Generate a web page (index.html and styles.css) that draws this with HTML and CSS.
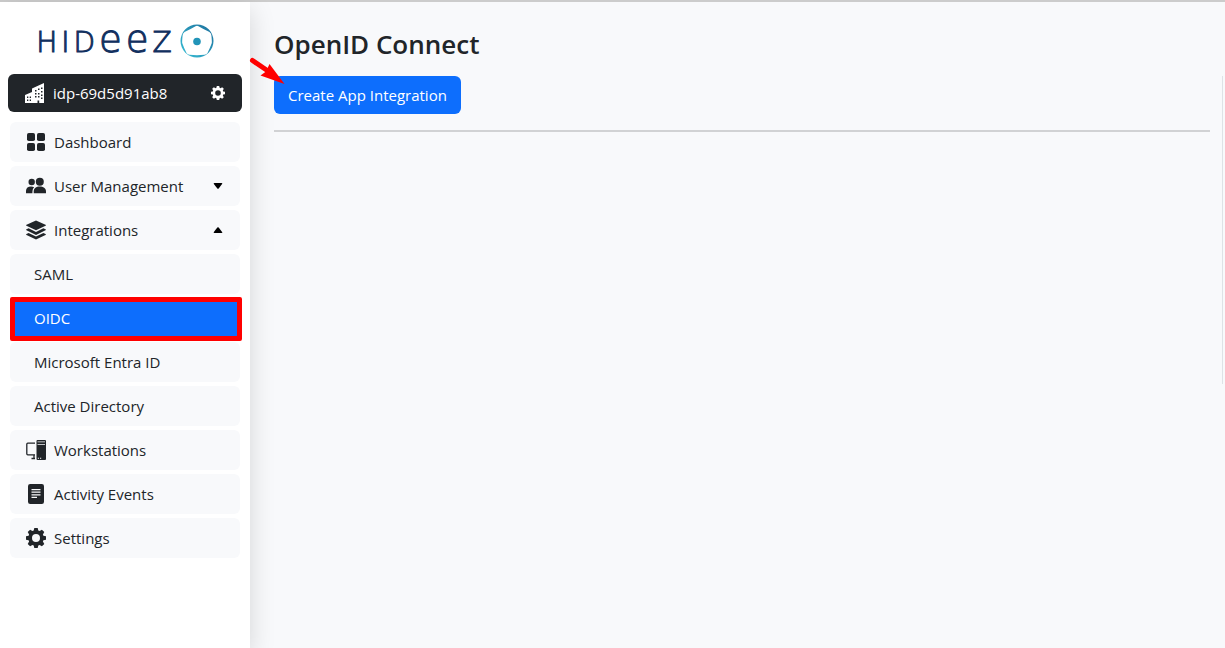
FILE: index.html
```html
<!DOCTYPE html>
<html lang="en">
<head>
<meta charset="utf-8">
<meta name="viewport" content="width=device-width, initial-scale=1">
<title>OpenID Connect</title>
<link rel="stylesheet" href="styles.css">
</head>
<body>
<div class="app">
  <aside class="sidebar">
    <a class="logo" href="#" aria-label="Hideez">
      <span class="wordmark"><span>H</span><span>I</span><span>D</span><span class="tall">e</span><span class="tall">e</span><span>Z</span></span>
      <svg class="logo-mark" viewBox="0 0 34 34" aria-hidden="true">
        <defs><linearGradient id="ring" x1="1" y1="0" x2="0" y2="1"><stop offset="0" stop-color="#1d6f9c"/><stop offset="1" stop-color="#37bfd6"/></linearGradient></defs>
        <path fill="url(#ring)" fill-rule="evenodd" d="M17 .5a16.500 16.500 0 1 1 0 33A16.500 16.500 0 0 1 17 .5ZM15.500 2.200Q10 5.500 4.500 8Q2.500 9.500 2.600 11.500Q2 17 2.200 19Q4 24 6.500 29Q7.500 30.600 9.500 30.800Q17 31.500 24.500 30.800Q26.500 30.600 27.500 29Q30 24 31.800 19Q32 17 31.400 11.500Q31.500 9.500 29.500 8Q24 5.500 18.500 2.200Q17 1.500 15.500 2.200Z"/>
        <circle cx="17" cy="17.500" r="3.800" fill="#2294b8"/>
      </svg>
    </a>
    <div class="org">
      <svg class="icon" viewBox="0 0 20 20" aria-hidden="true">
        <path fill="#fff" d="M0 12l7-3V5.500L19 0v20H0z"/>
        <path fill="#212529" d="M10 7h1.500v1.500H10zM13 5.500h1.500V7H13zM16 4.500h1.500V6H16zM10 10h1.500v1.500H10zM13 10h1.500v1.500H13zM16 8h1.500v1.500H16zM10 13h1.500v1.500H10zM13 13h1.500v1.500H13zM16 11.500h1.500V13H16zM16 14.500h1.500V16H16zM2 13.500h1.300V15H2zM4.700 13.500H6V15H4.700zM2 16.500h1.300V18H2zM4.700 16.500H6V18H4.700zM12.500 17.500h1.700V20h-1.700z"/>
      </svg>
      <span class="org-name">idp-69d5d91ab8</span>
      <button class="gear-button" type="button" aria-label="Organization settings">
        <svg class="icon-small" viewBox="0 0 20 20" aria-hidden="true"><path fill="currentColor" fill-rule="evenodd" d="M8.300 0h3.400l.6 2.600 1.300.5 2.300-1.400 2.400 2.400-1.400 2.300.5 1.300 2.600.6v3.400l-2.600.6-.5 1.300 1.400 2.300-2.400 2.400-2.300-1.400-1.300.5-.6 2.600H8.300l-.6-2.600-1.300-.5-2.300 1.400-2.400-2.400 1.400-2.300-.5-1.300L0 11.700V8.300l2.600-.6.5-1.300-1.400-2.300 2.400-2.400 2.300 1.400 1.300-.5zM10 6a4 4 0 1 0 0 8 4 4 0 0 0 0-8z"/></svg>
      </button>
    </div>
    <nav class="menu" aria-label="Main">
      <a class="item" href="#">
        <svg class="icon" viewBox="0 0 20 20" aria-hidden="true" fill="currentColor"><rect x="1" y="1" width="8" height="8" rx="1.800"/><rect x="11" y="1" width="8" height="8" rx="1.800"/><rect x="1" y="11" width="8" height="8" rx="1.800"/><rect x="11" y="11" width="8" height="8" rx="1.800"/></svg>
        <span>Dashboard</span>
      </a>
      <button class="item" type="button" aria-expanded="false">
        <svg class="icon" viewBox="0 0 20 20" aria-hidden="true" fill="currentColor"><circle cx="5.700" cy="6" r="3.200"/><circle cx="13.800" cy="5.800" r="4"/><path d="M0 17.300v-2.500C0 12 2.200 10.500 5 10.500c1.200 0 2.300.2 3.200.7C6.800 12.500 6.400 14 6.400 17.300z"/><path d="M7.700 17.300v-2c0-3 2.500-4.700 6-4.700s6.300 1.700 6.300 4.700v2z"/></svg>
        <span>User Management</span>
        <svg class="caret" viewBox="0 0 10 6" aria-hidden="true"><path d="M1.400 0h7.200q1.200 0 .5 1L5.700 5.500q-.7.700-1.400 0L.9 1Q.2 0 1.400 0z"/></svg>
      </button>
      <button class="item" type="button" aria-expanded="true">
        <svg class="icon" viewBox="0 0 20 20" aria-hidden="true" fill="currentColor"><path d="M10 .5l9.500 4.300q.8.500 0 1L10 10.300.5 5.800q-.8-.5 0-1z"/><path d="M2.600 8.300L10 11.900l7.400-3.600 2.100 1q.8.500 0 1L10 14.900.5 10.300q-.8-.5 0-1z"/><path d="M2.600 12.900L10 16.500l7.400-3.600 2.100 1q.8.500 0 1L10 19.500.5 14.900q-.8-.5 0-1z"/></svg>
        <span>Integrations</span>
        <svg class="caret" viewBox="0 0 10 6" aria-hidden="true"><path d="M1.400 6h7.200q1.200 0 .5-1L5.700.5Q5-.2 4.300.5L.9 5Q.2 6 1.400 6z"/></svg>
      </button>
      <a class="item sub" href="#">SAML</a>
      <a class="item sub active" href="#" aria-current="page">OIDC</a>
      <a class="item sub" href="#">Microsoft Entra ID</a>
      <a class="item sub" href="#">Active Directory</a>
      <a class="item" href="#">
        <svg class="icon" viewBox="0 0 20 20" aria-hidden="true"><path fill="none" stroke="currentColor" stroke-width="1.300" d="M9 3.200H1.800q-1 0-1 1v9.600q0 1 1 1H9M8 15v2.800M5.500 18.500H9"/><path fill="currentColor" d="M11.500 0H19q1 0 1 1v18q0 1-1 1h-7.500q-1 0-1-1V1q0-1 1-1z"/><path fill="#f8f9fb" d="M11.500 1.500H19v.8h-7.500zM11.500 4H19v.8h-7.500zM11.800 17.700H13v1h-1.200zM14 17.700h1.200v1H14z"/></svg>
        <span>Workstations</span>
      </a>
      <a class="item" href="#">
        <svg class="icon" viewBox="0 0 20 20" aria-hidden="true"><rect x="2" width="16" height="20" rx="2.200" fill="currentColor"/><path stroke="#f8f9fb" stroke-width="1.200" d="M5.500 5.600h9M5.500 8.200h9M5.500 10.800h9M5.500 13.400h5.500"/></svg>
        <span>Activity Events</span>
      </a>
      <a class="item" href="#">
        <svg class="icon" viewBox="0 0 20 20" aria-hidden="true"><path fill="currentColor" fill-rule="evenodd" d="M8.300 0h3.400l.6 2.600 1.300.5 2.300-1.400 2.400 2.400-1.400 2.300.5 1.300 2.600.6v3.400l-2.600.6-.5 1.300 1.400 2.300-2.400 2.400-2.300-1.400-1.300.5-.6 2.600H8.300l-.6-2.600-1.300-.5-2.300 1.400-2.400-2.400 1.400-2.300-.5-1.300L0 11.700V8.300l2.600-.6.5-1.300-1.400-2.300 2.400-2.400 2.300 1.400 1.300-.5zM10 6a4 4 0 1 0 0 8 4 4 0 0 0 0-8z"/></svg>
        <span>Settings</span>
      </a>
    </nav>
  </aside>
  <main class="content">
    <h1 class="title">OpenID Connect</h1>
    <section class="panel">
      <div class="action">
        <button class="primary" type="button">Create App Integration</button>
        <svg class="pointer" viewBox="0 0 36 28" aria-hidden="true" fill="#f00"><path d="M3.500 3.500L19 14" stroke="#f00" stroke-width="5" stroke-linecap="round"/><path d="M20.500 7L35.500 27 11.500 18.500 17 14.500z"/></svg>
      </div>
      <hr class="divider">
    </section>
  </main>
</div>
</body>
</html>
```
FILE: styles.css
```css
* {
  box-sizing: border-box;
}

body {
  margin: 0;
  font-family: "Open Sans", "Noto Sans", sans-serif;
  font-size: 15px;
  line-height: 24px;
  color: #212529;
  background: #f8f9fb;
}

button {
  font: inherit;
  color: inherit;
  border: 0;
  cursor: pointer;
}

a {
  color: inherit;
  text-decoration: none;
}

.app {
  display: flex;
  min-height: 100vh;
  border-top: 2px solid #ccc;
}

.sidebar {
  flex: none;
  width: 250px;
  padding: 20px 8px;
  background: #fff;
  box-shadow: 0 8px 24px rgba(0, 0, 0, 0.15);
}

.logo {
  display: flex;
  align-items: center;
  justify-content: center;
  gap: 8px;
  height: 38px;
  margin-bottom: 14px;
  color: #12305f;
}

.wordmark {
  display: flex;
  align-items: baseline;
  gap: 4px;
  font-family: "DejaVu Sans", sans-serif;
  font-size: 28px;
  font-weight: 200;
  line-height: 38px;
  -webkit-text-stroke: 1px #12305f;
}

.tall {
  font-size: 37px;
}

.logo-mark {
  width: 34px;
  height: 34px;
}

.org {
  display: flex;
  align-items: center;
  gap: 8px;
  height: 38px;
  padding: 0 16px 0 17px;
  border-radius: 6px;
  color: #fff;
  background: #212529;
}

.org-name {
  flex: 1;
}

.gear-button {
  display: flex;
  padding: 1px;
  background: none;
}

.icon {
  flex: none;
  width: 20px;
  height: 20px;
}

.icon-small {
  width: 14px;
  height: 14px;
}

.menu {
  display: flex;
  flex-direction: column;
  gap: 4px;
  padding: 10px 2px;
}

.item {
  display: flex;
  align-items: center;
  gap: 8px;
  height: 40px;
  padding: 0 16px;
  border-radius: 6px;
  text-align: left;
  background: #f8f9fb;
}

.sub {
  padding-left: 24px;
}

.active {
  position: relative;
  color: #fff;
  background: #0d6efd;
}

.active::after {
  content: "";
  position: absolute;
  inset: -1px -2px -3px 0;
  border: 5px solid #f00;
  border-radius: 2px;
}

.caret {
  width: 10px;
  height: 6px;
  margin-left: auto;
  margin-right: 1px;
  fill: #000;
}

.content {
  flex: 1;
  min-width: 0;
  padding: 24px 2px 24px 24px;
}

.title {
  margin: 0 0 14px;
  font-size: 26px;
  font-weight: 600;
  line-height: 36px;
}

.panel {
  min-height: 308px;
  padding-right: 12px;
  border-right: 1px solid #dee2e6;
}

.action {
  position: relative;
  width: fit-content;
}

.primary {
  display: block;
  height: 38px;
  padding: 0 14px;
  border-radius: 6px;
  color: #fff;
  background: #0d6efd;
}

.pointer {
  position: absolute;
  top: -19px;
  left: -25px;
  width: 36px;
  height: 28px;
}

.divider {
  margin: 16px 0;
  border: 0;
  border-top: 2px solid #d1d2d4;
}
```
